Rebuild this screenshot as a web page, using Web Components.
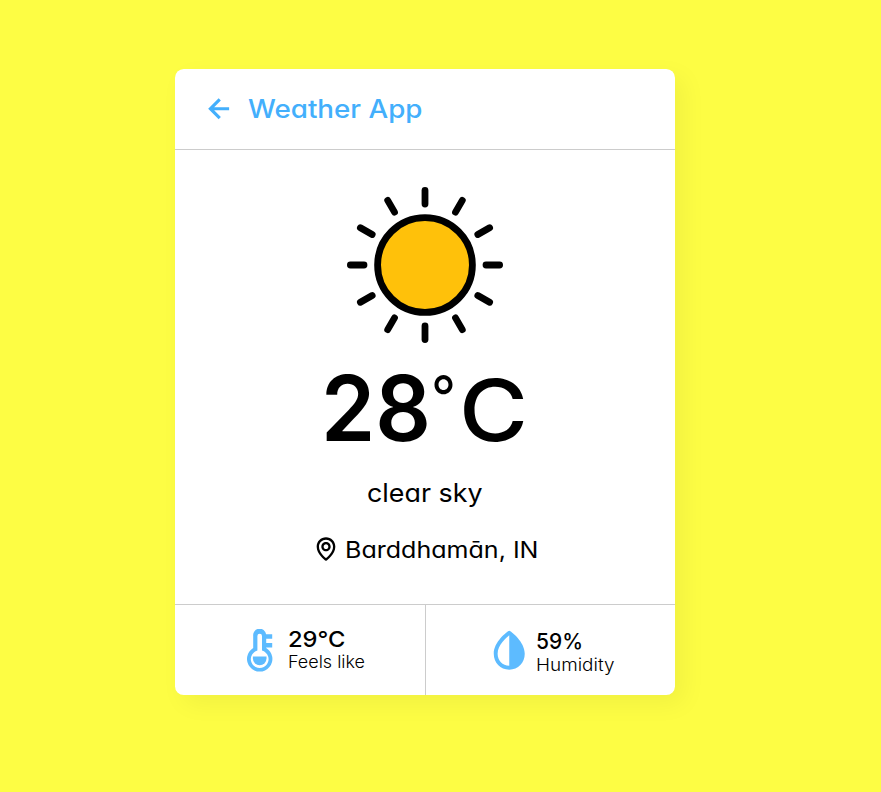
<!DOCTYPE html>
<html lang="en">
<head>
<meta charset="utf-8">
<title>Weather App</title>
<style>
html, body { margin: 0; height: 100%; }
body { background: #fdfd44; font-family: Inter, "Open Sans", sans-serif; color: #000; overflow: hidden; }
</style>
</head>
<body>
<weather-app></weather-app>
<script>
/* One line of text set to a given width: size, weight, w (advance width), h (box height), base (baseline in the box). */
customElements.define('fit-text', class extends HTMLElement {
  connectedCallback() {
    const a = n => this.getAttribute(n);
    const root = this.attachShadow({ mode: 'open' });
    root.innerHTML = `<style>
      :host { display: block; flex: none; }
      svg { display: block; overflow: visible; }
      text { fill: currentColor; font-feature-settings: "cv11" 1; white-space: pre; }
    </style><svg width="${a('w')}" height="${a('h')}"><text x="0" y="${a('base')}" font-size="${a('size')}" font-weight="${a('weight') || 400}" textLength="${a('w')}" lengthAdjust="spacingAndGlyphs"></text></svg>`;
    root.querySelector('text').textContent = this.getAttribute('label');
  }
});

const ICONS = {
  back: ['0 0 24 24', '<path d="M12.707 17.293 8.414 13H18v-2H8.414l4.293-4.293-1.414-1.414L4.586 12l6.707 6.707z"/>'],
  map: ['0 0 24 24', '<path d="M12 14c2.206 0 4-1.794 4-4s-1.794-4-4-4-4 1.794-4 4 1.794 4 4 4zm0-6c1.103 0 2 .897 2 2s-.897 2-2 2-2-.897-2-2 .897-2 2-2z"/><path d="M11.42 21.814a.998.998 0 0 0 1.16 0C12.884 21.599 20.029 16.44 20 10c0-4.411-3.589-8-8-8S4 5.589 4 9.995c-.029 6.445 7.116 11.604 7.42 11.819zM12 4c3.309 0 6 2.691 6 6 .021 4.438-4.388 8.423-6 9.73-1.611-1.308-6.021-5.294-6-9.735 0-3.309 2.691-6 6-6z"/>'],
  thermo: ['0 0 26 43', '<path fill-rule="evenodd" d="M6.2 7a6.5 6.5 0 0 1 12.9-1.7H25.2v4.4H19.2v4.3H25.2v4.4H19.2v.6A12.7 12.7 0 1 1 6.2 19ZM10.4 7v14.6a8.9 8.9 0 1 0 4.6 0V7a2.3 2.3 0 0 0-4.6 0Z"/><path d="M5.9 27.500h13.6v2a6.8 6.8 0 0 1-13.6 0Z"/>'],
  drop: ['0 0 24 24', '<path fill-rule="evenodd" d="M12 22c4.6 0 8-3.5 8-8.2C20 7.5 12.9 2.4 12.6 2.2a1 1 0 0 0-1.2 0C11.1 2.4 4 7.5 4 13.8 4 18.5 7.4 22 12 22ZM12 4.3V20c-3.5 0-6-2.6-6-6.2 0-4.400 4.400-8.100 6-9.500Z"/>']
};
customElements.define('app-icon', class extends HTMLElement {
  connectedCallback() {
    const [box, art] = ICONS[this.getAttribute('name')];
    this.attachShadow({ mode: 'open' }).innerHTML = `<style>
      :host { display: block; flex: none; }
      svg { display: block; width: 100%; height: 100%; fill: currentColor; }
    </style><svg viewBox="${box}">${art}</svg>`;
  }
});

customElements.define('sun-icon', class extends HTMLElement {
  connectedCallback() {
    let rays = '';
    for (let i = 0; i < 12; i++) rays += `<path d="M0-61V-74.600" transform="rotate(${i * 30})"/>`;
    this.attachShadow({ mode: 'open' }).innerHTML = `<style>
      :host { display: block; width: 156px; height: 156px; }
      svg { display: block; }
    </style><svg width="156" height="156" viewBox="-78 -78 156 156" stroke="#000" stroke-width="6.8" stroke-linecap="round"><circle r="47.400" fill="#ffc10a"/>${rays}</svg>`;
  }
});

customElements.define('detail-cell', class extends HTMLElement {
  connectedCallback() {
    this.attachShadow({ mode: 'open' }).innerHTML = `<style>
      :host { display: flex; align-items: flex-start; box-sizing: border-box; height: 90px; }
      .icon { color: #5dbbff; }
      .lines { display: flex; flex-direction: column; }
    </style><div class="icon"><slot name="icon"></slot></div><div class="lines"><slot></slot></div>`;
  }
});

customElements.define('weather-app', class extends HTMLElement {
  connectedCallback() {
    this.attachShadow({ mode: 'open' }).innerHTML = `<style>
      :host { display: block; padding: 69px 0 0 175px; }
      .card { width: 500px; height: 626px; background: #fff; border-radius: 8.75px; box-shadow: 8.75px 8.75px 25px rgba(0,0,0,.05); display: flex; flex-direction: column; }
      header { box-sizing: border-box; height: 81px; border-bottom: 1px solid #ccc; display: flex; align-items: flex-start; padding: 20.500px 0 0 25.500px; color: #43affc; }
      header app-icon { width: 37.5px; height: 37.5px; }
      header fit-text { margin-left: 9.500px; margin-top: .500px; }
      main { height: 454px; display: flex; flex-direction: column; }
      sun-icon { margin: 37px 0 0 172px; }
      .temp { display: flex; margin: 17px 0 0 145.500px; height: 96px; }
      .temp .deg { margin: 0 3px 0 0; }
      .desc { margin: 13px 0 0 192px; }
      .place { display: flex; align-items: flex-start; margin: 34px 0 0 137px; }
      .place app-icon { width: 28px; height: 28px; }
      .place fit-text { margin-left: 5px; }
      footer { height: 91px; box-sizing: border-box; border-top: 1px solid #ccc; display: grid; grid-template-columns: 250px 250px; }
      .feels { padding: 23.500px 0 0 71.500px; }
      .feels app-icon { width: 26px; height: 43px; margin-right: 15.500px; }
      .humid { padding: 21.500px 0 0 60px; border-left: 1px solid #ccc; }
      .humid app-icon { width: 46.500px; height: 46.500px; margin-right: 3.500px; }
    </style>
    <div class="card">
      <header><app-icon name="back"></app-icon><fit-text label="Weather App" size="25.500" weight="500" w="174.500" h="38" base="28"></fit-text></header>
      <main>
        <sun-icon></sun-icon>
        <div class="temp">
          <fit-text label="28" size="90.500" weight="600" w="110" h="96" base="81"></fit-text>
          <fit-text class="deg" label="°" size="59" weight="400" w="25" h="96" base="58"></fit-text>
          <fit-text label="C" size="85" weight="450" w="69" h="96" base="81"></fit-text>
        </div>
        <fit-text class="desc" label="clear sky" size="25.500" weight="370" w="115.500" h="32" base="33"></fit-text>
        <div class="place"><app-icon name="map"></app-icon><fit-text label="Barddhamān, IN" size="23" weight="370" w="193.500" h="30" base="23"></fit-text></div>
      </main>
      <footer>
        <detail-cell class="feels"><app-icon slot="icon" name="thermo"></app-icon>
          <fit-text label="29°C" size="22" weight="450" w="57.500" h="23" base="18"></fit-text>
          <fit-text label="Feels like" size="17" weight="350" w="77" h="22" base="16"></fit-text></detail-cell>
        <detail-cell class="humid"><app-icon slot="icon" name="drop"></app-icon>
          <fit-text label="59%" size="22" weight="450" w="47" h="23" base="22"></fit-text>
          <fit-text label="Humidity" size="17" weight="350" w="78.500" h="22" base="20.500"></fit-text></detail-cell>
      </footer>
    </div>`;
  }
});
</script>
</body>
</html>
